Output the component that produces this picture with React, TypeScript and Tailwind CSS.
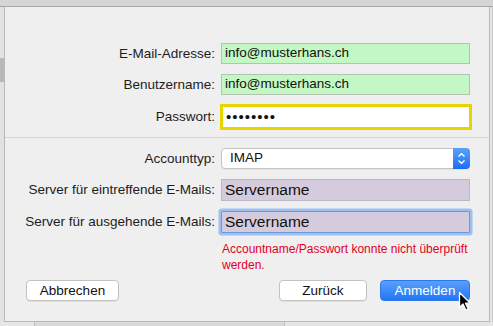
import React from 'react';

const label = 'w-[190px] shrink-0 text-right pr-[0px] text-[13.5px] text-[#1c1c1c] leading-none';

const Row: React.FC<{ name: string; className?: string; children: React.ReactNode }> = ({ name, className, children }) => (
  <div className={`flex items-center gap-[6px] pl-[20px] ${className ?? ''}`}>
    <div className={label}>{name}</div>
    {children}
  </div>
);

const Cursor: React.FC = () => (
  <svg className="absolute left-[453px] top-[284px]" width="14" height="21" viewBox="0 0 14 21">
    <path
      d="M1.5 1.5 L1.5 16.5 L5 13 L7.8 19 L10.2 18 L7.5 12.2 L12.3 12.2 Z"
      fill="#000"
      stroke="#fff"
      strokeWidth="1.3"
      strokeLinejoin="round"
    />
  </svg>
);

export default function App() {
  return (
    <div className="w-[493px] h-[326px] flex flex-col bg-[#dcdcdc] overflow-hidden font-['Liberation_Sans',Arial,sans-serif]">
      <div className="h-[7px] shrink-0 bg-[#d5d5d5] border-b border-[#a6a6a6]" />

      <div className="flex h-[315px] shrink-0">
        <div className="w-[4px] bg-[#e2e2e2] flex flex-col">
          <div className="h-[51px]" />
          <div className="h-[24px] bg-[#b8b8b8]" />
        </div>

        <div className="relative w-[486px] bg-[#efefef] border-l border-r border-b border-[#b9b9b9] flex flex-col">
          <Row name="E-Mail-Adresse:" className="mt-[36px] h-[21px]">
            <div className="w-[249px] h-[21px] bg-[#c3f7c3] border border-[#b3c2b3] flex items-center pl-[3px] text-[13.5px] text-[#111]">
              info@musterhans.ch
            </div>
          </Row>

          <Row name="Benutzername:" className="mt-[10px] h-[21px]">
            <div className="w-[249px] h-[21px] bg-[#c3f7c3] border border-[#b3c2b3] flex items-center pl-[3px] text-[13.5px] text-[#111]">
              info@musterhans.ch
            </div>
          </Row>

          <Row name="Passwort:" className="mt-[9px] h-[26px]">
            <div className="-ml-[1px] w-[252px] h-[26px] bg-white border-[3px] border-[#e4d700] flex items-center pl-[3px] text-[15px] tracking-[1px] text-[#111]">
              ••••••••
            </div>
          </Row>

          <div className="mt-[7px] h-px bg-[#d6d6d6]" />

          <Row name="Accounttyp:" className="mt-[10px] h-[21px]">
            <div className="w-[249px] h-[21px] bg-white border border-[#c4c4c4] rounded-[4px] flex items-center shadow-[0_1px_0_rgba(0,0,0,0.05)]">
              <span className="flex-1 pl-[8px] text-[13.5px] text-[#111]">IMAP</span>
              <div className="w-[17px] h-[21px] -mr-px -my-px rounded-r-[4px] bg-gradient-to-b from-[#5aa1fb] to-[#1a6ef4] flex items-center justify-center">
                <svg width="9" height="13" viewBox="0 0 9 13">
                  <path d="M1.5 4.5 L4.5 1.8 L7.5 4.5 M1.5 8.5 L4.5 11.2 L7.5 8.5" fill="none" stroke="#fff" strokeWidth="1.4" />
                </svg>
              </div>
            </div>
          </Row>

          <Row name="Server für eintreffende E-Mails:" className="mt-[10px] h-[22px]">
            <div className="w-[249px] h-[22px] bg-[#d4cbdd] border border-[#bcb6c3] flex items-center pl-[3px] text-[15.5px] text-[#111]">
              Servername
            </div>
          </Row>

          <Row name="Server für ausgehende E-Mails:" className="mt-[10px] h-[22px]">
            <div className="w-[249px] h-[22px] bg-[#d4cbdd] border border-[#6f97d6] shadow-[0_0_0_2.5px_#9cc2f5] rounded-[1px] flex items-center pl-[3px] text-[15.5px] text-[#111]">
              Servername
            </div>
          </Row>

          <div className="mt-[8px] pl-[217px] text-[12px] leading-[16px] text-[#e3001f]">
            Accountname/Passwort konnte nicht überprüft
            <br />
            werden.
          </div>

          <div className="mt-[7px] flex items-center pl-[21px] pr-[19px]">
            <button className="w-[93px] h-[21px] bg-white border border-[#c2c2c2] rounded-[4px] text-[13.5px] text-[#111] shadow-[0_1px_0_rgba(0,0,0,0.06)]">
              Abbrechen
            </button>
            <div className="flex-1" />
            <button className="w-[88px] h-[21px] bg-white border border-[#c2c2c2] rounded-[4px] text-[13.5px] text-[#111] shadow-[0_1px_0_rgba(0,0,0,0.06)]">
              Zurück
            </button>
            <button className="ml-[13px] w-[90px] h-[21px] rounded-[4px] border border-[#2b78ec] bg-gradient-to-b from-[#59a0fb] to-[#2475f4] text-[13.5px] text-white">
              Anmelden
            </button>
          </div>

          <Cursor />
        </div>

        <div className="w-[3px] bg-[#e6e6e6] border-r border-[#c9c9c9]" />
      </div>

      <div className="flex flex-1">
        <div className="w-[35px] bg-[#e6e6e6] border-r border-[#c2c2c2]" />
        <div className="w-[250px] bg-[#dadada] border-r border-[#c2c2c2]" />
        <div className="flex-1 bg-[#e4e4e4]" />
      </div>
    </div>
  );
}
